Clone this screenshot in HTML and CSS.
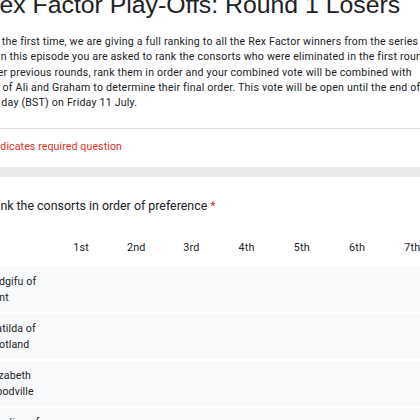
FILE: index.html
```
<!DOCTYPE html>
<html lang="en">
<head>
    <meta charset="UTF-8">
    <meta name="viewport" content="width=device-width, initial-scale=1.0">
    <title>Rex Factor Play-Offs: Round 1 Losers</title>
    <link rel="stylesheet" href="styles.css">
</head>
<body>
    <div class="form">
        <div class="card header-card">
            <h1 class="title">Rex Factor Play-Offs: Round 1 Losers</h1>
            <div class="desc">
                <span class="line">For the first time, we are giving a full ranking to all the Rex Factor winners from the series</span>
                <span class="line">in. In this episode you are asked to rank the consorts who were eliminated in the first round.</span>
                <span class="line">After previous rounds, rank them in order and your combined vote will be combined with</span>
                <span class="line">say of Ali and Graham to determine their final order. This vote will be open until the end of</span>
                <span class="line">the day (BST) on Friday 11 July.</span>
            </div>
            <div class="required">* Indicates required question</div>
        </div>

        <div class="card question">
            <div class="q-title">Rank the consorts in order of preference <span class="star">*</span></div>
            <div class="grid">
                <div class="head"></div>
                <div class="head">1st</div>
                <div class="head">2nd</div>
                <div class="head">3rd</div>
                <div class="head">4th</div>
                <div class="head">5th</div>
                <div class="head">6th</div>
                <div class="head">7th</div>
                <div class="head">8th</div>

                <div class="row"><div class="label">Eadgifu of Kent</div></div>
                <div class="row"><div class="label">Matilda of Scotland</div></div>
                <div class="row"><div class="label">Elizabeth Woodville</div></div>
                <div class="row"><div class="label">Caroline of Brunswick</div></div>
            </div>
        </div>
    </div>
</body>
</html>
```
FILE: styles.css
```
body { margin: 0; background: #eaeaea; overflow: hidden; font-family: Roboto, Arial, sans-serif; color: #202124; }
.form { margin-left: -40px; margin-top: -9.8px; width: 640px; }
.card { background: #fff; }
.title { font-family: "Liberation Sans", Arial, sans-serif; font-weight: normal; font-size: 24.8px; line-height: 30.4px; margin: 0; padding-left: 21.6px; color: #202124; }
.desc { margin-top: 13.6px; padding: 0 0 18px 23px; font-size: 10.6px; line-height: 15.2px; letter-spacing: 0.2px; }
.desc .line { display: block; white-space: nowrap; }
.required { border-top: 1px solid #dadce0; padding: 9.9px 0 12.9px 24px; font-size: 10.6px; line-height: 15.2px; letter-spacing: 0.1px; color: #d93025; }
.question { margin-top: 10px; padding-top: 19.9px; }
.q-title { padding-left: 26px; font-size: 12.4px; line-height: 18.2px; }
.star { color: #d93025; }
.grid { display: grid; grid-template-columns: 83.5px repeat(8, 55.2px); row-gap: 2px; margin-top: 24.3px; padding-left: 10px; }
.head { font-size: 10.8px; line-height: 15.2px; text-align: center; padding-bottom: 10.4px; letter-spacing: 0.2px; }
.row { grid-column: 1 / -1; height: 45px; background: #f8f9fa; display: flex; align-items: center; }
.label { width: 60px; padding-left: 17px; font-size: 10.6px; line-height: 15.2px; letter-spacing: 0.1px; }
```
